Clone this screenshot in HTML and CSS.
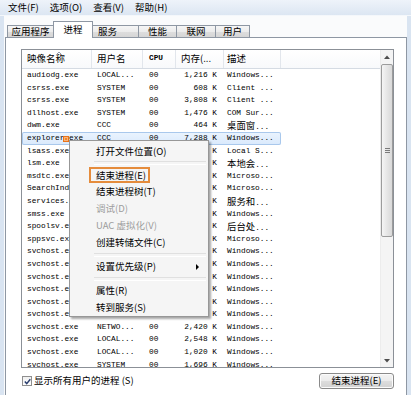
FILE: index.html
```html
<!DOCTYPE html>
<html lang="zh-CN">
<head>
<meta charset="utf-8">
<title>Windows 任务管理器</title>
<link rel="stylesheet" href="styles.css">
</head>
<body>
<div class="win">
  <div class="menubar">
    <span>文件(F)</span><span>选项(O)</span><span>查看(V)</span><span>帮助(H)</span>
  </div>
  <div class="client">
    <div class="tabs">
      <div class="tab t1">应用程序</div>
      <div class="tab sel t2">进程</div>
      <div class="tab t3">服务</div>
      <div class="tab t4">性能</div>
      <div class="tab t5">联网</div>
      <div class="tab t6">用户</div>
    </div>
    <div class="panel">
      <div class="list">
        <div class="cols">
          <div class="hdr">
            <div class="hc c1"><svg class="sort" width="6" height="4" viewBox="0 0 6 4"><path d="M0.5 3.5 L3 1 L5.5 3.5" fill="none" stroke="#8c9ab0" stroke-width="1"/></svg>映像名称</div>
            <div class="hc c2">用户名</div>
            <div class="hc c3 mono">CPU</div>
            <div class="hc c4">内存(...</div>
            <div class="hc c5">描述</div>
            <div class="hc c6"></div>
          </div>
          <div class="rows">
            <div class="row"><div class="c c1">audiodg.exe</div><div class="c c2">LOCAL...</div><div class="c c3">00</div><div class="c c4">1,216 K</div><div class="c c5">Windows...</div></div>
            <div class="row"><div class="c c1">csrss.exe</div><div class="c c2">SYSTEM</div><div class="c c3">00</div><div class="c c4">608 K</div><div class="c c5">Client ...</div></div>
            <div class="row"><div class="c c1">csrss.exe</div><div class="c c2">SYSTEM</div><div class="c c3">00</div><div class="c c4">3,808 K</div><div class="c c5">Client ...</div></div>
            <div class="row"><div class="c c1">dllhost.exe</div><div class="c c2">SYSTEM</div><div class="c c3">00</div><div class="c c4">1,476 K</div><div class="c c5">COM Sur...</div></div>
            <div class="row"><div class="c c1">dwm.exe</div><div class="c c2">CCC</div><div class="c c3">00</div><div class="c c4">464 K</div><div class="c c5"><span class="cjk">桌面窗</span>...</div></div>
            <div class="row selrow"><div class="c c1">explorer.exe</div><div class="c c2">CCC</div><div class="c c3">00</div><div class="c c4">7,288 K</div><div class="c c5">Windows...</div></div>
            <div class="row"><div class="c c1">lsass.exe</div><div class="c c2">SYSTEM</div><div class="c c3">00</div><div class="c c4">2,608 K</div><div class="c c5">Local S...</div></div>
            <div class="row"><div class="c c1">lsm.exe</div><div class="c c2">SYSTEM</div><div class="c c3">00</div><div class="c c4">1,052 K</div><div class="c c5"><span class="cjk">本地会</span>...</div></div>
            <div class="row"><div class="c c1">msdtc.exe</div><div class="c c2">NETWO...</div><div class="c c3">00</div><div class="c c4">1,480 K</div><div class="c c5">Microso...</div></div>
            <div class="row"><div class="c c1">SearchIndexer.exe</div><div class="c c2">SYSTEM</div><div class="c c3">00</div><div class="c c4">9,960 K</div><div class="c c5">Microso...</div></div>
            <div class="row"><div class="c c1">services.exe</div><div class="c c2">SYSTEM</div><div class="c c3">00</div><div class="c c4">3,572 K</div><div class="c c5"><span class="cjk">服务和</span>...</div></div>
            <div class="row"><div class="c c1">smss.exe</div><div class="c c2">SYSTEM</div><div class="c c3">00</div><div class="c c4">232 K</div><div class="c c5">Windows...</div></div>
            <div class="row"><div class="c c1">spoolsv.exe</div><div class="c c2">SYSTEM</div><div class="c c3">00</div><div class="c c4">3,644 K</div><div class="c c5"><span class="cjk">后台处</span>...</div></div>
            <div class="row"><div class="c c1">sppsvc.exe</div><div class="c c2">NETWO...</div><div class="c c3">00</div><div class="c c4">2,020 K</div><div class="c c5">Microso...</div></div>
            <div class="row"><div class="c c1">svchost.exe</div><div class="c c2">SYSTEM</div><div class="c c3">00</div><div class="c c4">3,060 K</div><div class="c c5">Windows...</div></div>
            <div class="row"><div class="c c1">svchost.exe</div><div class="c c2">NETWO...</div><div class="c c3">00</div><div class="c c4">4,112 K</div><div class="c c5">Windows...</div></div>
            <div class="row"><div class="c c1">svchost.exe</div><div class="c c2">LOCAL...</div><div class="c c3">00</div><div class="c c4">8,204 K</div><div class="c c5">Windows...</div></div>
            <div class="row"><div class="c c1">svchost.exe</div><div class="c c2">SYSTEM</div><div class="c c3">00</div><div class="c c4">6,336 K</div><div class="c c5">Windows...</div></div>
            <div class="row"><div class="c c1">svchost.exe</div><div class="c c2">SYSTEM</div><div class="c c3">00</div><div class="c c4">9,872 K</div><div class="c c5">Windows...</div></div>
            <div class="row"><div class="c c1">svchost.exe</div><div class="c c2">LOCAL...</div><div class="c c3">00</div><div class="c c4">5,128 K</div><div class="c c5">Windows...</div></div>
            <div class="row"><div class="c c1">svchost.exe</div><div class="c c2">NETWO...</div><div class="c c3">00</div><div class="c c4">2,420 K</div><div class="c c5">Windows...</div></div>
            <div class="row"><div class="c c1">svchost.exe</div><div class="c c2">LOCAL...</div><div class="c c3">00</div><div class="c c4">2,548 K</div><div class="c c5">Windows...</div></div>
            <div class="row"><div class="c c1">svchost.exe</div><div class="c c2">LOCAL...</div><div class="c c3">00</div><div class="c c4">1,020 K</div><div class="c c5">Windows...</div></div>
            <div class="row"><div class="c c1">svchost.exe</div><div class="c c2">SYSTEM</div><div class="c c3">00</div><div class="c c4">1,696 K</div><div class="c c5">Windows...</div></div>
          </div>
        </div>
        <div class="vscroll">
          <div class="sbtn"><svg width="6" height="4" viewBox="0 0 6 4"><path d="M0 4 L3 0.5 L6 4 Z" fill="#4d4d4d"/></svg></div>
          <div class="track">
            <div class="thumb"><span class="grip"></span></div>
          </div>
          <div class="sbtn"><svg width="6" height="4" viewBox="0 0 6 4"><path d="M0 0 L3 3.5 L6 0 Z" fill="#4d4d4d"/></svg></div>
        </div>
      </div>
      <div class="foot">
        <div class="chk">
          <span class="box"><svg width="7" height="7" viewBox="0 0 7 7"><path d="M0.8 3.6 L2.7 5.6 L6.3 1.2" fill="none" stroke="#2a3e6e" stroke-width="1.4"/></svg></span>
          <span>显示所有用户的进程 (S)</span>
        </div>
        <div class="btn">结束进程(E)</div>
      </div>
    </div>
  </div>

  <span class="marker"></span>

  <div class="ctx">
    <div class="mi">打开文件位置(O)</div>
    <div class="msep"></div>
    <div class="mi"><span class="hl">结束进程(E)</span></div>
    <div class="mi">结束进程树(T)</div>
    <div class="mi dis">调试(D)</div>
    <div class="mi dis">UAC 虚拟化(V)</div>
    <div class="mi">创建转储文件(C)</div>
    <div class="msep tall"></div>
    <div class="mi sub">设置优先级(P)<span class="arrow"></span></div>
    <div class="msep tall"></div>
    <div class="mi">属性(R)</div>
    <div class="mi">转到服务(S)</div>
  </div>
</div>
</body>
</html>
```

FILE: styles.css
```css
* { box-sizing: border-box; }

html, body {
  margin: 0;
  padding: 0;
}

body {
  width: 411px;
  height: 395px;
  overflow: hidden;
  background: #d9e4f1;
  font-family: "Noto Sans CJK SC", "Noto Sans", sans-serif;
  font-size: 9.5px;
  color: #000;
}

.win {
  position: relative;
  height: 395px;
  display: flex;
  flex-direction: column;
}

/* ---------- menu bar ---------- */
.menubar {
  height: 16px;
  flex: none;
  display: flex;
  align-items: center;
  gap: 11px;
  padding-left: 8px;
  background: linear-gradient(#eef3fa, #dce6f2);
  border-bottom: 1px solid #f4f7fb;
  line-height: 1;
}

/* ---------- client ---------- */
.client {
  flex: 1;
  margin: 0 4px;
  background: #fafbfc;
  display: flex;
  flex-direction: column;
}

.tabs {
  height: 21px;
  flex: none;
  display: flex;
  align-items: flex-end;
  padding-left: 3px;
  position: relative;
  z-index: 2;
}

.tab {
  height: 12px;
  margin-left: -1px;
  border: 1px solid #8e97a3;
  border-bottom: none;
  background: linear-gradient(#f6f6f6, #ececec 50%, #dedede 51%, #d6d6d6);
  display: flex;
  align-items: center;
  justify-content: center;
  line-height: 1;
  padding-top: 1px;
}
.tab.t1 { margin-left: 0; width: 47px; }
.tab.t2 { width: 40px; }
.tab.t3 { width: 47px; justify-content: flex-start; padding-left: 5px; }
.tab.t4 { width: 39px; }
.tab.t5 { width: 40px; }
.tab.t6 { width: 35px; }

.tab.sel {
  height: 17px;
  margin-bottom: -1px;
  background: #fff;
  padding-bottom: 2px;
}

.panel {
  flex: 1;
  margin-left: 1px;
  width: 402px;
  border: 1px solid #8e97a3;
  border-bottom: none;
  background: #fff;
  padding: 11px 0 0 15px;
}

/* ---------- list view ---------- */
.list {
  width: 373px;
  height: 319px;
  border: 1px solid #8b9097;
  display: flex;
  background: #fff;
}

.cols {
  width: 358px;
  display: flex;
  flex-direction: column;
  overflow: hidden;
}

.hdr {
  height: 19px;
  flex: none;
  display: flex;
  border-bottom: 1px solid #d5dbe3;
  background: linear-gradient(#ffffff, #f8f9fb);
}

.hc {
  position: relative;
  display: flex;
  align-items: center;
  border-right: 1px solid #e2e6ec;
  line-height: 1;
  white-space: nowrap;
  overflow: hidden;
}
.hc.c6 { border-right: none; flex: 1; }
.hc.mono {
  font-family: "Liberation Mono", monospace;
  font-size: 7.8px;
  font-weight: bold;
}

.sort {
  position: absolute;
  left: 34px;
  top: 1px;
}

.c1 { width: 70px; padding-left: 5px; }
.c2 { width: 51px; padding-left: 5px; }
.c3 { width: 33px; padding-left: 6px; }
.c4 { width: 48px; padding-left: 5px; }
.c5 { width: 57px; padding-left: 3px; }

.rows {
  flex: 1;
  overflow: hidden;
}

.row {
  height: 12.6px;
  width: 259px;
  display: flex;
  font-family: "Liberation Mono", monospace;
  font-size: 7.8px;
  line-height: 12.6px;
  color: #000;
}

.c {
  white-space: nowrap;
  overflow: hidden;
}
.row .c4 {
  text-align: right;
  padding-left: 0;
  padding-right: 7px;
}

.cjk {
  font-family: "Noto Sans CJK SC", sans-serif;
  font-size: 9.4px;
}

.selrow {
  background: linear-gradient(#ebf4fe, #d9e9fc);
  box-shadow: inset 0 0 0 1px #a9c8ec;
  border-radius: 2px;
}

/* ---------- scrollbar ---------- */
.vscroll {
  width: 13px;
  display: flex;
  flex-direction: column;
  background: #f4f4f4;
  border-left: 1px solid #ececec;
}

.sbtn {
  height: 13px;
  flex: none;
  display: flex;
  align-items: center;
  justify-content: center;
}

.track {
  flex: 1;
  padding-top: 1px;
}

.thumb {
  height: 173px;
  border: 1px solid #9c9c9c;
  border-radius: 2px;
  background: linear-gradient(to right, #f5f5f5, #e6e6e6 50%, #d9d9d9);
  display: flex;
  align-items: center;
  justify-content: center;
}

.grip {
  width: 5px;
  height: 5px;
  background: repeating-linear-gradient(#7a7a7a 0 1px, transparent 1px 2px);
}

/* ---------- footer ---------- */
.foot {
  width: 373px;
  margin-top: 5px;
  height: 16px;
  display: flex;
  align-items: center;
  justify-content: space-between;
  padding-left: 1px;
}

.chk {
  display: flex;
  align-items: center;
  gap: 2px;
  line-height: 1;
}

.box {
  width: 10px;
  height: 10px;
  border: 1px solid #8f8f8f;
  background: linear-gradient(#f0f0f0, #ffffff);
  display: flex;
  align-items: center;
  justify-content: center;
}

.btn {
  width: 75px;
  height: 16px;
  border: 1px solid #8a8a8a;
  border-radius: 3px;
  background: linear-gradient(#f4f4f4, #ebebeb 48%, #dddddd 52%, #d2d2d2);
  box-shadow: inset 0 0 0 1px #fbfbfb;
  display: flex;
  align-items: center;
  justify-content: center;
  line-height: 1;
}

/* ---------- overlay marker ---------- */
.marker {
  position: absolute;
  left: 63px;
  top: 136px;
  width: 6px;
  height: 6px;
  background: #f0862a;
  border: 1.5px solid #e9731a;
  box-shadow: inset 0 0 0 1px #f9b47a;
  z-index: 5;
}

/* ---------- context menu ---------- */
.ctx {
  position: absolute;
  left: 69px;
  top: 140px;
  width: 140px;
  padding: 2px 0 0;
  background: #f5f5f5;
  border: 1px solid #979797;
  box-shadow: 2px 2px 2px rgba(0, 0, 0, 0.35);
  z-index: 10;
}

.mi {
  position: relative;
  height: 17px;
  padding-left: 26px;
  display: flex;
  align-items: center;
  line-height: 1;
  white-space: nowrap;
}
.mi.dis { color: #9d9d9d; }

.hl {
  display: inline-block;
  margin-left: -7px;
  padding: 1px 2px 0 5px;
  line-height: 11px;
  border: 2px solid #e58c3c;
}

.arrow {
  position: absolute;
  right: 9px;
  top: 6px;
  width: 0;
  height: 0;
  border-left: 3px solid #000;
  border-top: 3px solid transparent;
  border-bottom: 3px solid transparent;
}

.msep {
  height: 6px;
  margin-left: 24px;
  margin-right: 2px;
  display: flex;
  align-items: center;
}
.msep.tall { height: 7px; }
.msep::before {
  content: "";
  flex: 1;
  height: 2px;
  border-top: 1px solid #e0e0e0;
  border-bottom: 1px solid #ffffff;
}
```
